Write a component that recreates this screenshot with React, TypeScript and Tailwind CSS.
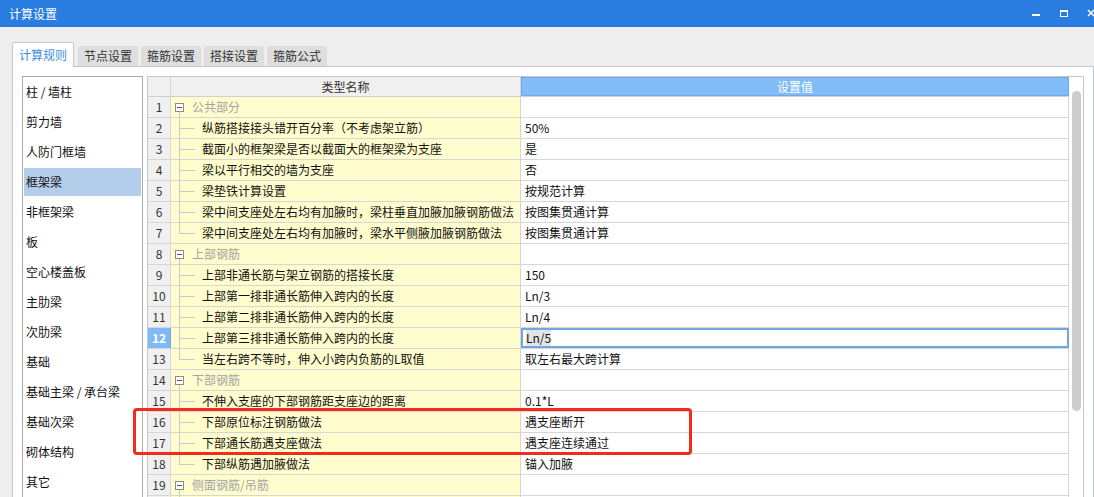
import React from "react";

type Row = { n: number; t: string; v?: string; g?: boolean; last?: boolean };

const rows: Row[] = [
  { n: 1, t: "公共部分", g: true },
  { n: 2, t: "纵筋搭接接头错开百分率（不考虑架立筋）", v: "50%" },
  { n: 3, t: "截面小的框架梁是否以截面大的框架梁为支座", v: "是" },
  { n: 4, t: "梁以平行相交的墙为支座", v: "否" },
  { n: 5, t: "梁垫铁计算设置", v: "按规范计算" },
  { n: 6, t: "梁中间支座处左右均有加腋时，梁柱垂直加腋加腋钢筋做法", v: "按图集贯通计算" },
  { n: 7, t: "梁中间支座处左右均有加腋时，梁水平侧腋加腋钢筋做法", v: "按图集贯通计算", last: true },
  { n: 8, t: "上部钢筋", g: true },
  { n: 9, t: "上部非通长筋与架立钢筋的搭接长度", v: "150" },
  { n: 10, t: "上部第一排非通长筋伸入跨内的长度", v: "Ln/3" },
  { n: 11, t: "上部第二排非通长筋伸入跨内的长度", v: "Ln/4" },
  { n: 12, t: "上部第三排非通长筋伸入跨内的长度", v: "Ln/5" },
  { n: 13, t: "当左右跨不等时，伸入小跨内负筋的L取值", v: "取左右最大跨计算", last: true },
  { n: 14, t: "下部钢筋", g: true },
  { n: 15, t: "不伸入支座的下部钢筋距支座边的距离", v: "0.1*L" },
  { n: 16, t: "下部原位标注钢筋做法", v: "遇支座断开" },
  { n: 17, t: "下部通长筋遇支座做法", v: "遇支座连续通过" },
  { n: 18, t: "下部纵筋遇加腋做法", v: "锚入加腋", last: true },
  { n: 19, t: "侧面钢筋/吊筋", g: true },
];

const menu = [
  "柱 / 墙柱",
  "剪力墙",
  "人防门框墙",
  "框架梁",
  "非框架梁",
  "板",
  "空心楼盖板",
  "主肋梁",
  "次肋梁",
  "基础",
  "基础主梁 / 承台梁",
  "基础次梁",
  "砌体结构",
  "其它",
];

const tabs = ["节点设置", "箍筋设置", "搭接设置", "箍筋公式"];

const NameCell = ({ row }: { row: Row }) => {
  if (row.g) {
    return (
      <div className="relative w-[350px] shrink-0 border-r border-[#d6d6d6] bg-[#fffdcd]">
        <span className="absolute left-[4px] top-[6px] w-[9px] h-[9px] border border-[#8a8a8a] bg-white flex items-center justify-center">
          <span className="w-[5px] h-px bg-[#555]" />
        </span>
        <span className="absolute left-[8px] top-[15px] bottom-0 border-l border-[#cacaca]" />
        <span className="pl-[21px] text-[#a3a3a3]">{row.t}</span>
      </div>
    );
  }
  return (
    <div className="relative w-[350px] shrink-0 border-r border-[#d6d6d6] bg-[#fffdcd]">
      <span
        className={
          row.last
            ? "absolute left-[8px] top-0 h-[10px] border-l border-[#cacaca]"
            : "absolute left-[8px] top-0 bottom-0 border-l border-[#cacaca]"
        }
      />
      <span className="absolute left-[8px] top-[10px] w-[16px] border-t border-[#cacaca]" />
      <span className="pl-[31px] text-[#111]">{row.t}</span>
    </div>
  );
};

export default function App() {
  return (
    <div
      className="relative w-[1094px] h-[497px] overflow-hidden bg-[#eeeeee] text-[12px] leading-[20px]"
      style={{ fontFamily: '"Noto Sans CJK SC", "Noto Sans", sans-serif' }}
    >
      {/* title bar */}
      <div className="h-[27px] bg-[#2a7de0] flex items-center pl-[9px] text-white text-[12px]">
        <span className="flex-1">计算设置</span>
        <svg width="62" height="27" viewBox="0 0 62 27" className="shrink-0">
          <rect x="0" y="14" width="8" height="2" fill="#fff" />
          <rect x="28.5" y="10.5" width="7" height="6" fill="none" stroke="#fff" strokeWidth="1" />
          <rect x="28" y="10" width="8" height="2" fill="#fff" />
          <path d="M56 10 L62 16 M62 10 L56 16" stroke="#fff" strokeWidth="1.5" />
        </svg>
      </div>

      {/* tabs */}
      <div className="flex items-end gap-[3px] ml-[12px] mt-[15px] h-[24px] relative z-10">
        <div className="w-[62px] h-[25px] -mb-px bg-white border border-b-0 border-[#c6c6ce] rounded-t-[2px] flex items-center justify-center text-[#3b8de4]">
          计算规则
        </div>
        {tabs.map((t, i) => (
          <div
            key={t}
            className={
              i === 0
                ? "ml-[1px] w-[60px] h-[20px] bg-[#dedede] rounded-t-[3px] flex items-center justify-center text-[#333]"
                : "w-[60px] h-[20px] bg-[#dedede] rounded-t-[3px] flex items-center justify-center text-[#333]"
            }
          >
            {t}
          </div>
        ))}
      </div>

      {/* panel */}
      <div className="ml-[12px] w-[1082px] h-[440px] bg-white border border-[#c6c6ce] pl-[9px] pt-[9px] flex gap-[4px]">
        {/* left list */}
        <div className="w-[121px] h-[430px] shrink-0 border border-[#ababab] p-[1px]">
          {menu.map((m, i) => (
            <div
              key={m}
              className={
                i === 3
                  ? "h-[28px] mb-[2px] flex items-center pl-[2px] bg-[#b4cdeb] text-[#111]"
                  : "h-[28px] mb-[2px] flex items-center pl-[2px] text-[#111]"
              }
            >
              {m}
            </div>
          ))}
        </div>

        {/* grid */}
        <div className="w-[937px] h-[430px] shrink-0 border border-[#c8c8c8] flex">
          <div className="flex flex-col w-[921px]">
            <div className="h-[20px] flex border-b border-[#d0d0d0]">
              <div className="w-[23px] shrink-0 bg-[#f0f0f0] border-r border-[#d6d6d6]" />
              <div className="w-[350px] shrink-0 bg-[#f0f0f0] border-r border-[#d6d6d6] text-center text-[#333]">
                类型名称
              </div>
              <div className="w-[548px] shrink-0 bg-[#82bcf7] border border-[#6ea8ea] text-center text-white leading-[18px]">
                设置值
              </div>
            </div>
            {rows.map((r) => (
              <div key={r.n} className="h-[21px] flex border-b border-[#d6d6d6] shrink-0">
                <div
                  className={
                    r.n === 12
                      ? "w-[23px] shrink-0 bg-[#7fb9f6] border-r border-[#6ea8ea] text-center text-white font-bold"
                      : "w-[23px] shrink-0 bg-[#f0f0f0] border-r border-[#d6d6d6] text-center text-[#333]"
                  }
                >
                  {r.n}
                </div>
                <NameCell row={r} />
                {r.n === 12 ? (
                  <div className="w-[548px] shrink-0 border-2 border-[#6fa7e4] pl-[3px] leading-[16px] flex items-center">
                    <span className="bg-[#e4e4e4] text-[#111]">Ln/5</span>
                  </div>
                ) : (
                  <div className="w-[548px] shrink-0 border-r border-[#d6d6d6] pl-[4px] text-[#111]">
                    {r.v}
                  </div>
                )}
              </div>
            ))}
            {/* next row, only its top edge is on screen */}
            <div className="h-[21px] flex shrink-0">
              <div className="w-[23px] shrink-0 bg-[#f0f0f0] border-r border-[#d6d6d6]" />
              <div className="relative w-[350px] shrink-0 border-r border-[#d6d6d6] bg-[#fffdcd]">
                <span className="absolute left-[8px] top-0 bottom-0 border-l border-[#cacaca]" />
              </div>
              <div className="w-[548px] shrink-0 border-r border-[#d6d6d6]" />
            </div>
          </div>
          <div className="w-[14px] shrink-0 pt-[14px] pl-[3px]">
            <div className="w-[9px] h-[320px] rounded-full bg-[#cdcdcd]" />
          </div>
        </div>
      </div>

      {/* annotation */}
      <div className="absolute left-[133px] top-[408px] w-[559px] h-[47px] border-[3px] border-[#f52a1c] rounded-[4px] pointer-events-none" />
    </div>
  );
}
